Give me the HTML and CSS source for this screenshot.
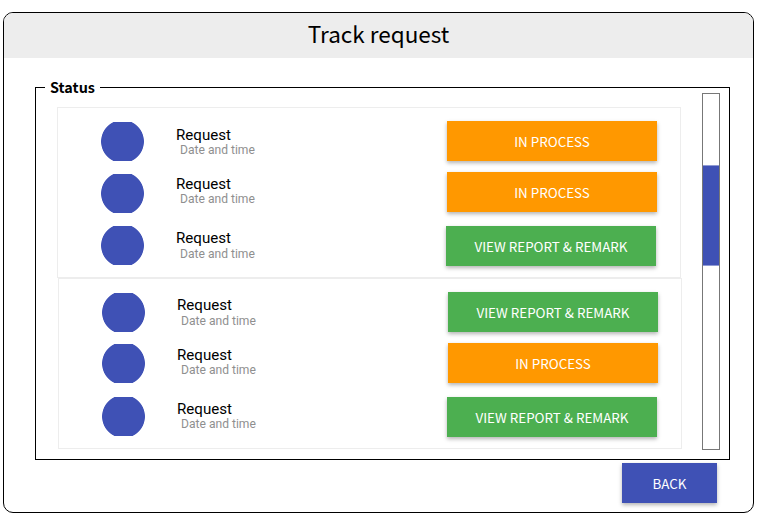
FILE: index.html
```
<!DOCTYPE html>
<html lang="en">
<head>
<meta charset="utf-8">
<title>Track request</title>
<link rel="stylesheet" href="styles.css">
</head>
<body>
<main class="window">
  <header class="title-bar"><h1>Track request</h1></header>
  <section class="status">
    <h2 class="status-label">Status</h2>
    <div class="groups">
      <div class="group">
        <div class="row">
          <span class="avatar"></span>
          <div class="info info-low"><div class="name">Request</div><div class="date">Date and time</div></div>
          <button class="btn pending">IN PROCESS</button>
        </div>
        <div class="row">
          <span class="avatar avatar-low"></span>
          <div class="info"><div class="name">Request</div><div class="date">Date and time</div></div>
          <button class="btn pending">IN PROCESS</button>
        </div>
        <div class="row row-last">
          <span class="avatar avatar-high"></span>
          <div class="info info-loose"><div class="name">Request</div><div class="date">Date and time</div></div>
          <button class="btn done">VIEW REPORT &amp; REMARK</button>
        </div>
      </div>
      <div class="group group-second">
        <div class="row">
          <span class="avatar"></span>
          <div class="info info-mid info-loose"><div class="name">Request</div><div class="date">Date and time</div></div>
          <button class="btn done">VIEW REPORT &amp; REMARK</button>
        </div>
        <div class="row">
          <span class="avatar"></span>
          <div class="info"><div class="name">Request</div><div class="date">Date and time</div></div>
          <button class="btn pending">IN PROCESS</button>
        </div>
        <div class="row row-last">
          <span class="avatar avatar-high"></span>
          <div class="info"><div class="name">Request</div><div class="date">Date and time</div></div>
          <button class="btn done">VIEW REPORT &amp; REMARK</button>
        </div>
      </div>
    </div>
    <div class="scrollbar"><div class="thumb"></div></div>
  </section>
  <footer class="actions"><button class="btn back">BACK</button></footer>
</main>
</body>
</html>
```
FILE: styles.css
```
* { box-sizing: border-box; }
body {
  margin: 0;
  padding: 12px 0 0 3px;
  background: #fff;
  color: #000;
  font-family: "Noto Sans CJK SC", sans-serif;
}
.window {
  width: 751px;
  height: 501px;
  border: 1px solid #000;
  border-radius: 10px;
  overflow: hidden;
}
.title-bar {
  height: 45px;
  background: #ededed;
  text-align: center;
}
h1 {
  margin: 0;
  font-size: 22.5px;
  font-weight: 400;
  line-height: 40px;
}
.status {
  position: relative;
  display: flex;
  align-items: flex-start;
  width: 695px;
  height: 373px;
  margin: 29px 0 0 31px;
  border: 1px solid #000;
}
.status-label {
  position: absolute;
  top: -12px;
  left: 9px;
  width: 55px;
  margin: 0;
  background: #fff;
  font-size: 14.4px;
  font-weight: 700;
  line-height: 22px;
  text-align: center;
}
.groups { margin: 19px 0 0 21px; }
.group {
  width: 624px;
  height: 171px;
  padding: 13px 0 0 43px;
  border: 1px solid #ededed;
}
.group-second { margin-left: 1px; }
.row {
  display: flex;
  align-items: flex-start;
  height: 40px;
  margin-bottom: 11px;
}
.row-last { margin-top: 14px; }
.row-last .btn { margin-left: -1px; }
.avatar {
  width: 43px;
  height: 39px;
  margin-top: 1px;
  background: radial-gradient(circle at center, #3f51b5 21px, transparent 21.8px);
}
.avatar-low { margin-top: 2px; }
.avatar-high { margin-top: 0; }
.info {
  width: 271px;
  margin: 4px 0 0 32px;
  font-family: Roboto, sans-serif;
}
.info-low { margin-top: 6px; }
.info-mid { margin-top: 5px; }
.name { font-size: 15.1px; line-height: 16px; }
.date {
  padding-left: 4px;
  color: #8f8f8f;
  font-size: 12.1px;
  line-height: 14px;
}
.info-loose .date { margin-top: 1px; }
.btn {
  width: 210px;
  height: 40px;
  padding: 0;
  border: 0;
  color: #fff;
  font: 400 13.4px/20px "Noto Sans CJK SC", sans-serif;
  box-shadow: 0 2px 4px rgba(0, 0, 0, .3);
}
.pending { background: #ff9800; }
.done { background: #4caf50; }
.scrollbar {
  width: 18px;
  height: 357px;
  margin: 5px 0 0 20px;
  padding-top: 71px;
  border: 1px solid #777;
}
.thumb {
  height: 101px;
  background: #3f51b5;
  border: solid #8f9ad3;
  border-width: 1px 0;
}
.actions {
  display: flex;
  justify-content: flex-end;
  padding: 3px 36px 0 0;
}
.back { width: 95px; background: #3f51b5; }
```
